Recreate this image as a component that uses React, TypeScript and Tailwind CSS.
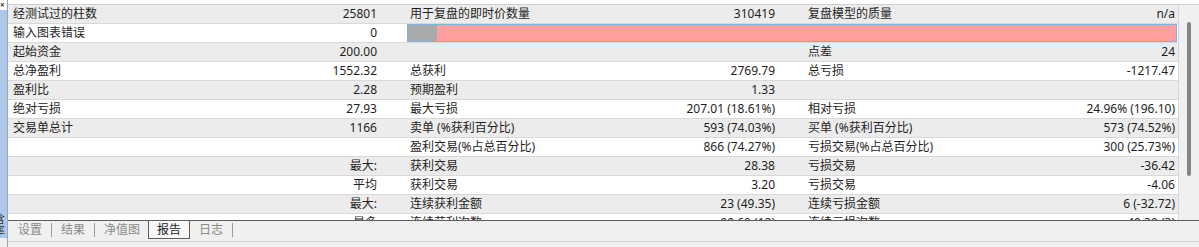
// Strategy tester report panel

type Cell = [string, string]

const rows: Cell[][] = [
  [['经测试过的柱数', '25801'], ['用于复盘的即时价数量', '310419'], ['复盘模型的质量', 'n/a']],
  [['输入图表错误', '0']],
  [['起始资金', '200.00'], ['', ''], ['点差', '24']],
  [['总净盈利', '1552.32'], ['总获利', '2769.79'], ['总亏损', '-1217.47']],
  [['盈利比', '2.28'], ['预期盈利', '1.33'], ['', '']],
  [['绝对亏损', '27.93'], ['最大亏损', '207.01 (18.61%)'], ['相对亏损', '24.96% (196.10)']],
  [['交易单总计', '1166'], ['卖单 (%获利百分比)', '593 (74.03%)'], ['买单 (%获利百分比)', '573 (74.52%)']],
  [['', ''], ['盈利交易(%占总百分比)', '866 (74.27%)'], ['亏损交易(%占总百分比)', '300 (25.73%)']],
  [['', '最大:'], ['获利交易', '28.38'], ['亏损交易', '-36.42']],
  [['', '平均'], ['获利交易', '3.20'], ['亏损交易', '-4.06']],
  [['', '最大:'], ['连续获利金额', '23 (49.35)'], ['连续亏损金额', '6 (-32.72)']],
  [['', '最多'], ['连续获利次数', '99.60 (12)'], ['连续亏损次数', '-49.30 (3)']],
]

const widths = ['w-[397px]', 'w-[398px]', 'w-[376px]']
const pads = ['pr-[28px]', 'pr-[28px]', 'pr-[4px]']

function Pair({ cell, i }: { cell: Cell; i: number }) {
  return (
    <div className={`${widths[i]} ${pads[i]} flex items-center justify-between pl-[5px] shrink-0`}>
      <span>{cell[0]}</span>
      <span>{cell[1]}</span>
    </div>
  )
}

function Row({ cells, idx }: { cells: Cell[]; idx: number }) {
  const bg = idx % 2 === 0 ? 'bg-[#ececec]' : 'bg-white'
  return (
    <div className={`flex h-[19px] shrink-0 border-b border-[#d9d9d9] ${bg}`}>
      {idx === 1 ? (
        <>
          <Pair cell={cells[0]} i={0} />
          <div className="flex-1 pl-[2px] pr-[1px]">
            <div className="flex h-[18px] border border-[#7fb2e5]">
              <div className="w-[29px] bg-[#aaaaaa]" />
              <div className="flex-1 bg-[#ff9f9f]" />
            </div>
          </div>
        </>
      ) : (
        cells.map((c, i) => <Pair key={i} cell={c} i={i} />)
      )}
    </div>
  )
}

const tabs = ['设置', '结果', '净值图', '报告', '日志']

export default function App() {
  return (
    <div
      className="flex w-[1199px] h-[247px] overflow-hidden bg-[#f0f0f0] text-[12px] text-[#1e1e1e]"
      style={{ fontFamily: '"Noto Sans", "Noto Sans CJK SC", sans-serif' }}
    >
      {/* left dock strip */}
      <div className="flex w-[7px] flex-col shrink-0">
        <div className="h-[10px] bg-white text-[8px] font-bold leading-[9px] text-[#333]">×</div>
        <div className="flex flex-1 flex-col justify-end overflow-hidden bg-[#adc8e8] pb-[1px]">
          <div className="ml-[-6px] text-[11px] leading-[12px] text-[#333]">
            含
            <br />
            率
          </div>
        </div>
        <div className="h-[9px] bg-[#f0f0f0]" />
      </div>

      <div className="flex w-[1192px] flex-col border-l border-[#9aa6b4]">
        <div className="h-[4px] shrink-0 bg-white" />
        <div className="flex h-[216px] shrink-0 border-t border-[#cfcfcf]">
          <div className="w-[1171px] overflow-hidden bg-white border-r border-[#d6d6d6]">
            {rows.map((r, i) => (
              <Row key={i} cells={r} idx={i} />
            ))}
          </div>
          <div className="flex flex-1 justify-center bg-[#f0f0f0] pt-[17px]">
            <div className="h-[154px] w-[4px] rounded-full bg-[#858585]" />
          </div>
        </div>

        {/* tabs */}
        <div className="flex h-[19px] shrink-0 items-stretch border-t border-[#5e5e5e] pl-[1px]">
          {tabs.map((t) =>
            t === '报告' ? (
              <div
                key={t}
                className="-ml-px flex items-center border-x border-b border-[#5e5e5e] bg-[#f8f8f8] px-[8px] text-[#1e1e1e]"
              >
                {t}
              </div>
            ) : (
              <div key={t} className="flex items-center">
                <span className="px-[9px] text-[#8a8a8a]">{t}</span>
                {t !== '净值图' && <span className="h-[14px] w-px bg-[#9a9a9a]" />}
              </div>
            ),
          )}
        </div>
        <div className="mt-[2px] flex-1 border-t border-[#d6d6d6] bg-[#f0f0f0]" />
      </div>
    </div>
  )
}
